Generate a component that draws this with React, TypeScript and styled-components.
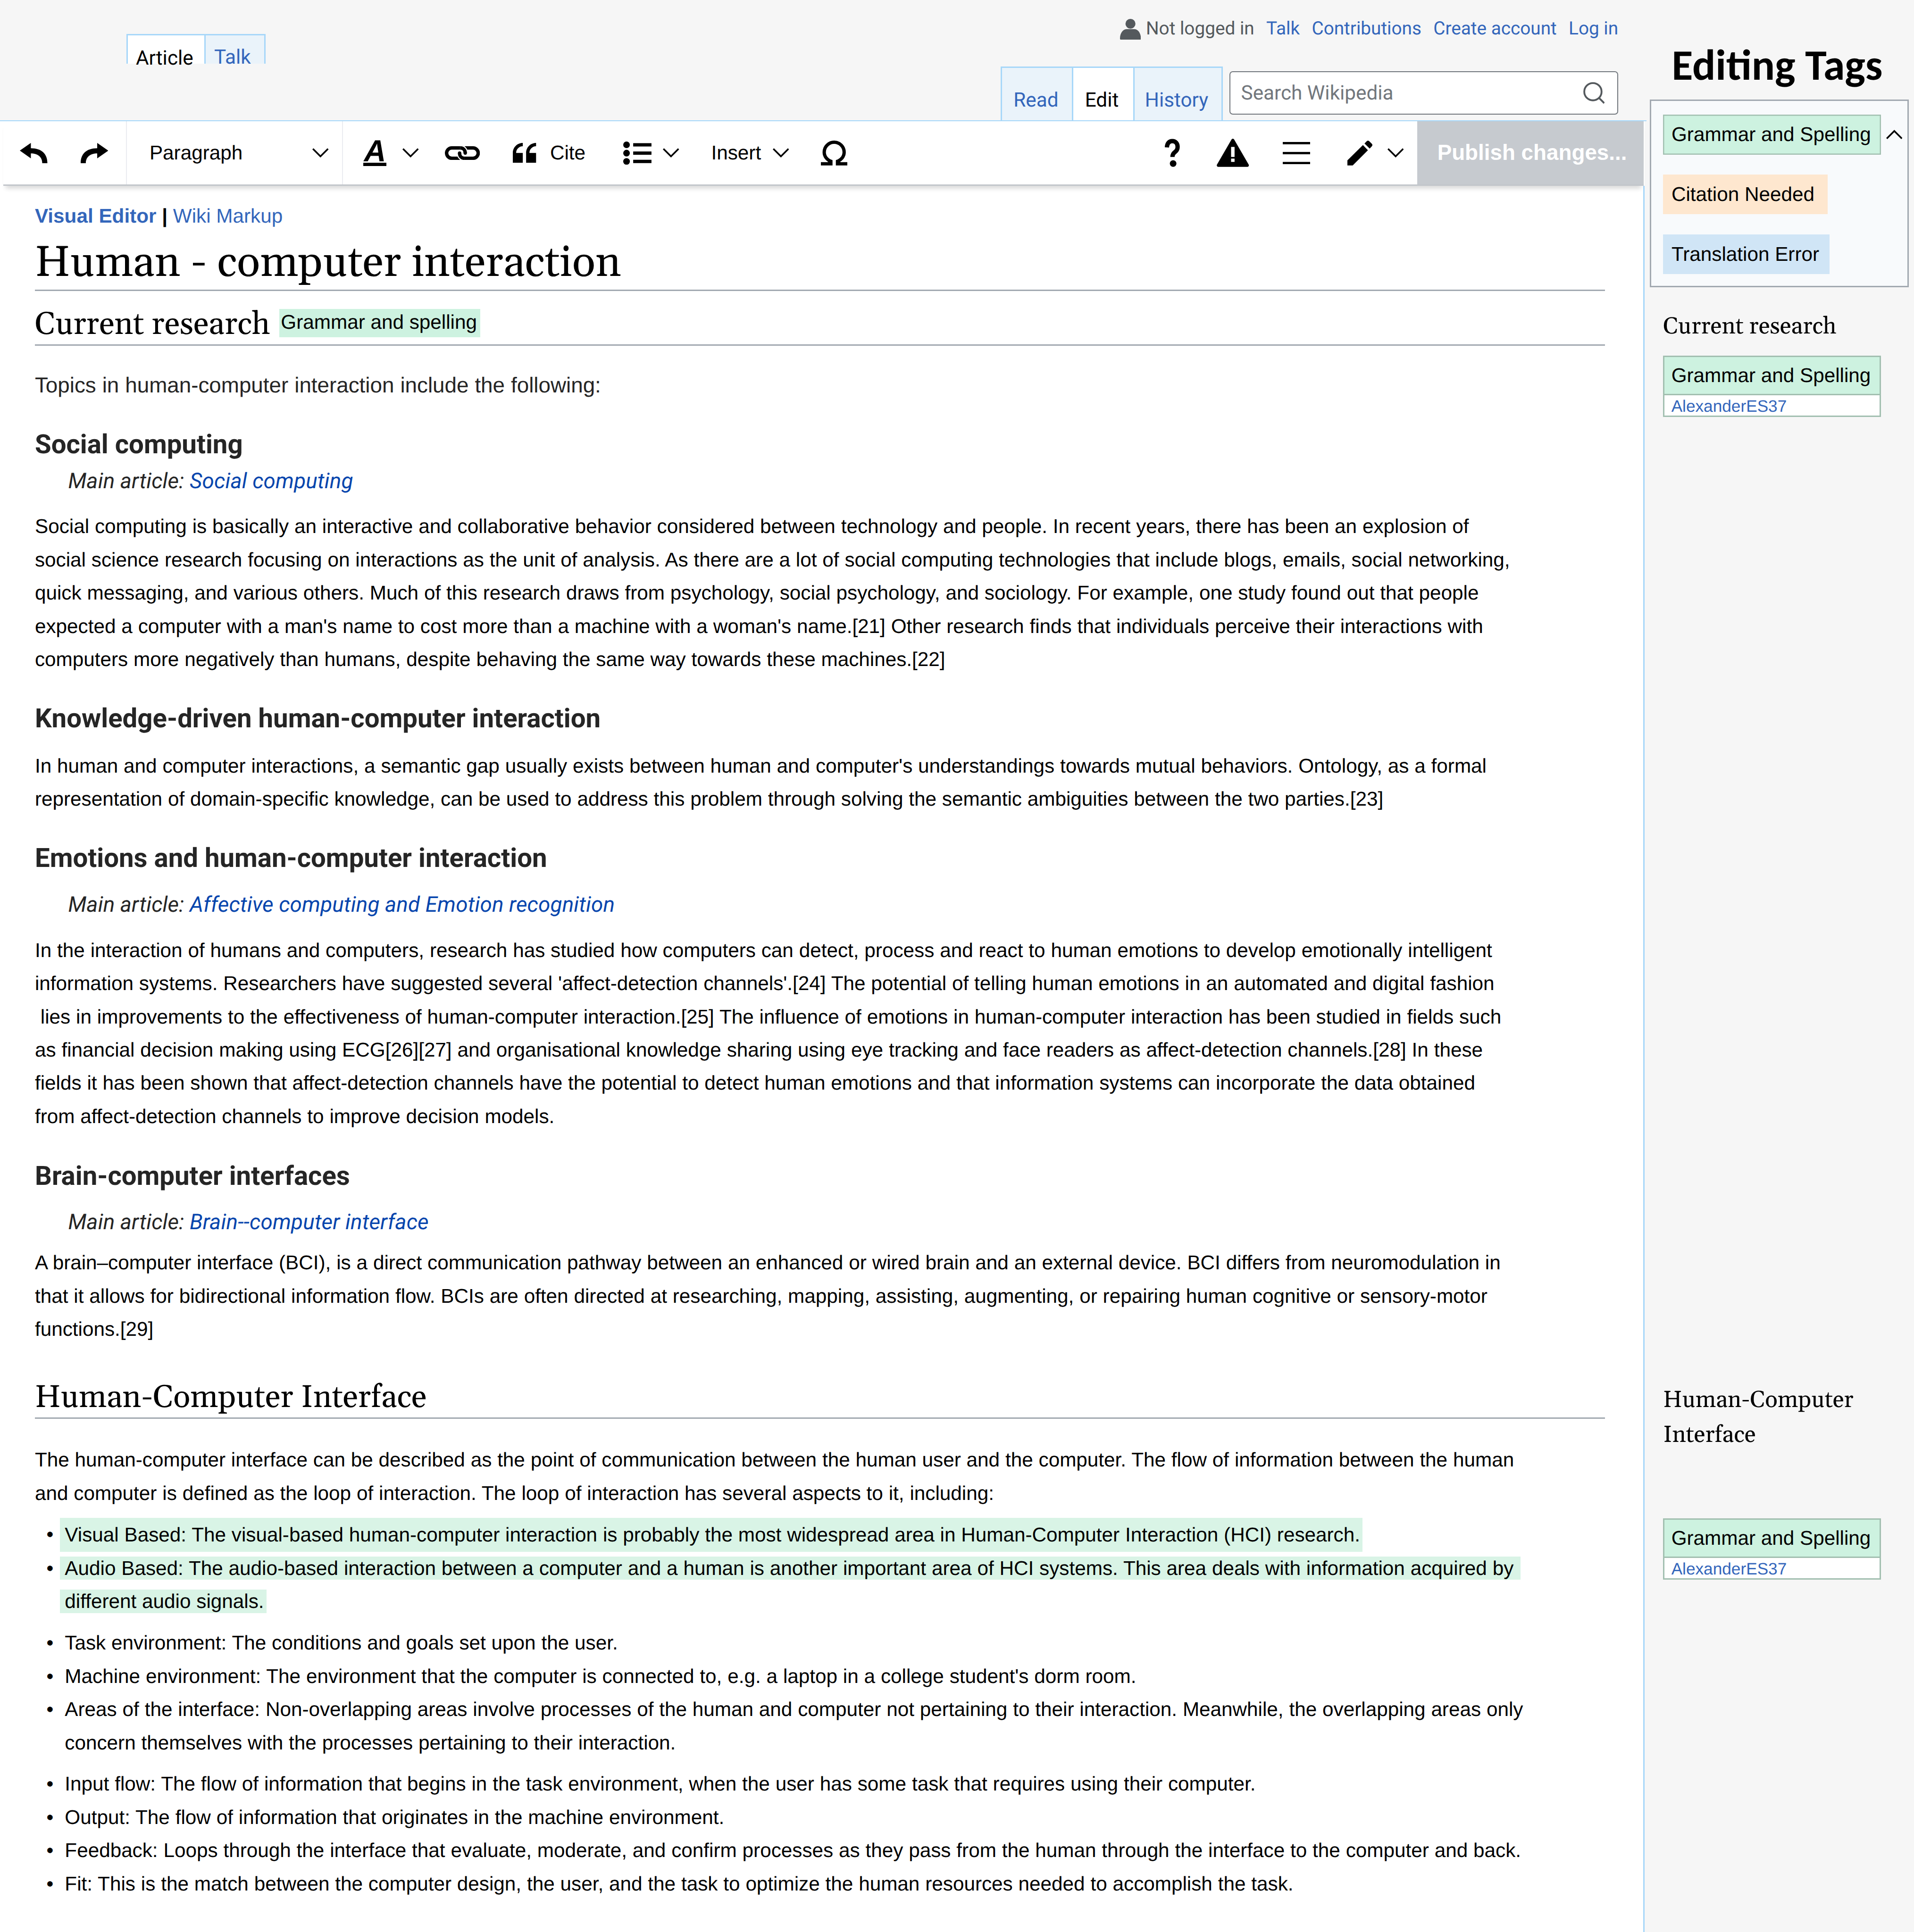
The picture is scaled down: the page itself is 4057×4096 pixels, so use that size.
import React from "react";
import styled, { createGlobalStyle, css } from "styled-components";

/* The page is designed on a 1152-unit wide grid; u() turns grid units into pixels. */
const UNIT = 4057 / 1152;
const u = (...n: number[]) => n.map((v) => `${+(v * UNIT).toFixed(3)}px`).join(" ");

const sans = `"Liberation Sans", Arial, sans-serif`;
const roboto = `Roboto, "Liberation Sans", sans-serif`;
const serif = `Georgia, Gelasio, "Liberation Serif", serif`;

const color = {
  chrome: "#f6f6f6",
  link: "#3366bb",
  linkDark: "#0645ad",
  line: "#a7d7f9",
  rule: "#a2a9b1",
  text: "#252525",
  green: "#cdf2e0",
  greenSoft: "#d9f4e6",
  greenLine: "#a2bfb0",
};

const GlobalStyle = createGlobalStyle`
  html, body { margin: 0; padding: 0; background: ${color.chrome}; }
  body { overflow: hidden; text-rendering: geometricPrecision; }
  *, *::before, *::after { box-sizing: border-box; }
  h1, h2, h3, p, ul { margin: 0; padding: 0; font-weight: 400; }
  svg { display: block; flex: none; }
`;

const Page = styled.div`
  display: flex;
  width: ${u(1152)};
  height: 4096px;
  overflow: hidden;
  background: ${color.chrome};
  font-family: ${sans};
  font-size: ${u(12)};
  color: #000;
`;

const Main = styled.div`
  display: flex;
  flex-direction: column;
  width: ${u(989.75)};
  flex: none;
  background: #fff;
`;

/* ---------- header ---------- */

const Header = styled.header`
  display: flex;
  justify-content: space-between;
  align-items: flex-start;
  width: ${u(991)};
  height: ${u(73)};
  flex: none;
  border-bottom: 2px solid ${color.line};
  background: ${color.chrome};
  font-family: ${roboto};
`;

const Tabs = styled.nav<{ $height: number }>`
  display: flex;
  height: ${(p) => u(p.$height)};
  border-top: ${u(1)} solid ${color.line};
  border-right: ${u(1)} solid ${color.line};
`;

const PageTabs = styled(Tabs)`
  margin: ${u(20.5, 0, 0, 76)};
`;

const Tab = styled.a<{ $active?: boolean; $width: number; $left: number; $top: number }>`
  width: ${(p) => u(p.$width)};
  padding: ${(p) => u(p.$top, 0, 0, p.$left)};
  border-left: ${u(1)} solid ${color.line};
  background: ${(p) => (p.$active ? "#fff" : "#eaf3fa")};
  color: ${(p) => (p.$active ? "#000" : color.link)};
  line-height: ${u(16)};
  white-space: nowrap;
`;

const HeaderRight = styled.div`
  display: flex;
  flex-direction: column;
  align-items: flex-end;
  padding: ${u(9.5, 17, 0, 0)};
`;

const UserBar = styled.div`
  display: flex;
  align-items: center;
  gap: ${u(7.2)};
  height: ${u(16)};
  font-size: ${u(11)};
  line-height: ${u(16)};
  color: ${color.link};
`;

const Anonymous = styled.span`
  display: flex;
  align-items: center;
  gap: ${u(3.1)};
  color: #54595d;
`;

const HeaderTools = styled.div`
  display: flex;
  align-items: flex-start;
  margin-top: ${u(14.5)};
`;

const Search = styled.div`
  display: flex;
  justify-content: space-between;
  align-items: center;
  width: ${u(234)};
  height: ${u(26)};
  margin: ${u(3, 0, 0, 4)};
  padding: ${u(0, 7.6, 0, 6.4)};
  border: 2px solid #72777d;
  border-radius: ${u(2)};
  background: #fff;
  color: #72777d;
`;

/* ---------- toolbar ---------- */

const Toolbar = styled.div`
  display: flex;
  align-items: center;
  position: relative;
  height: ${u(39)};
  flex: none;
  margin: ${u(0, 0.5, 0, 2)};
  border-bottom: ${u(1)} solid #c2c6cb;
  background: #fff;
  box-shadow: ${u(0, 3, 2.5, -1.4)} rgba(0, 0, 0, 0.14);
  line-height: ${u(20)};
`;

const ToolGroup = styled.div<{ $width?: number; $left: number; $divided?: boolean }>`
  display: flex;
  align-items: center;
  height: 100%;
  padding-left: ${(p) => u(p.$left)};
  ${(p) => (p.$width ? css`width: ${u(p.$width)};` : css`flex: 1;`)}
  ${(p) => p.$divided && css`border-right: 2px solid #eaecf0;`}
`;

const Tool = styled.span<{ $after?: number; $width?: number }>`
  display: flex;
  align-items: center;
  flex: none;
  height: ${u(20)};
  ${(p) => p.$width && css`width: ${u(p.$width)};`}
  margin-right: ${(p) => u(p.$after ?? 0)};
`;

const StyleLetter = styled.span`
  display: flex;
  justify-content: center;
  flex: none;
  width: ${u(14)};
  height: ${u(16)};
  margin: ${u(0, 9.6, 0, 0.2)};
  border-bottom: ${u(2)} solid #000;
  font: italic 700 ${u(18.4)} / ${u(13.4)} ${sans};
`;

const Publish = styled.button`
  align-self: stretch;
  width: ${u(136.25)};
  padding: ${u(0, 0, 0, 12.1)};
  border: 0;
  background: #c6cacf;
  color: #fff;
  font: 700 ${u(13)} / ${u(20)} ${sans};
  text-align: left;
`;

/* ---------- article ---------- */

const Article = styled.article`
  flex: 1;
  width: ${u(989.75)};
  padding: ${u(10.15, 0, 0, 21)};
  border-right: 3px solid ${color.line};
  background: #fff;
`;

const ModeSwitch = styled.div`
  line-height: ${u(16)};
  color: ${color.link};
  strong { font-weight: 700; }
  b { color: #000; }
`;

const Title = styled.h1`
  width: ${u(945)};
  height: ${u(34.4)};
  margin-top: ${u(2.6)};
  border-bottom: 3px solid ${color.rule};
  font: 400 ${u(26)} / ${u(35.8)} ${serif};
`;

const SectionHead = styled.h2<{ $gap: number }>`
  display: flex;
  width: ${u(945)};
  height: ${u(25.5)};
  margin-top: ${(p) => u(p.$gap)};
  border-bottom: 3px solid ${color.rule};
  font: 400 ${u(19)} / ${u(26)} ${serif};
`;

const InlineTag = styled.span`
  width: ${u(121)};
  height: ${u(17)};
  margin: ${u(3.5, 0, 0, 5.4)};
  padding-left: ${u(1)};
  background: ${color.green};
  font: 400 ${u(12)} / ${u(16.1)} ${sans};
`;

const Lead = styled.p`
  margin-top: ${u(13.9)};
  color: ${color.text};
  font-size: ${u(13)};
  line-height: ${u(20)};
  word-spacing: ${u(0.08)};
`;

const SubHead = styled.h3<{ $gap: number }>`
  margin-top: ${(p) => u(p.$gap)};
  color: ${color.text};
  font: 700 ${u(16)} / ${u(20)} ${roboto};
`;

const MainArticle = styled.div<{ $gap: number }>`
  margin: ${(p) => u(p.$gap, 0, 0, 20)};
  color: ${color.text};
  font: italic 400 ${u(13)} / ${u(20)} ${roboto};
  letter-spacing: ${u(0.054)};
  a { color: ${color.linkDark}; }
`;

const Text = styled.p<{ $gap: number }>`
  margin-top: ${(p) => u(p.$gap)};
  line-height: ${u(20)};
  word-spacing: ${u(0.035)};
  white-space: pre;
`;

const List = styled.ul`
  margin-top: ${u(4.7)};
  padding-left: ${u(7)};
  list-style: none;
`;

const Item = styled.li<{ $gap?: boolean }>`
  display: flex;
  margin-top: ${(p) => u(p.$gap ? 4.9 : 0)};
  line-height: ${u(20)};
  word-spacing: ${u(0.035)};
  white-space: pre;
  &::before {
    content: "•";
    width: ${u(11)};
  }
`;

const Mark = styled.span<{ $end: number }>`
  margin-left: ${u(-3)};
  padding: ${(p) => u(0.3, p.$end, 0.3, 3)};
  background: ${color.greenSoft};
`;

/* ---------- sidebar ---------- */

const Sidebar = styled.aside`
  flex: 1;
  padding: ${u(24, 3, 0, 3.25)};
`;

const SidebarTitle = styled.h2`
  padding-left: ${u(13.2)};
  font: 700 ${u(26.1)} / ${u(30)} Carlito, Calibri, Lato, sans-serif;
  white-space: nowrap;
`;

const TagPanel = styled.div`
  display: flex;
  flex-direction: column;
  gap: ${u(12)};
  height: ${u(113)};
  margin-top: ${u(6)};
  padding: ${u(8.2, 0, 0, 7.2)};
  border: 3px solid ${color.rule};
  background: #f8fafc;
`;

const TagRow = styled.div`
  display: flex;
  align-items: center;
  gap: ${u(3.2)};
`;

const Tag = styled.span<{ $bg: string; $width: number; $line?: string }>`
  width: ${(p) => u(p.$width)};
  height: ${u(24)};
  padding-left: ${u(5)};
  background: ${(p) => p.$bg};
  box-shadow: inset 0 0 0 2.5px ${(p) => p.$line ?? p.$bg};
  line-height: ${u(24)};
`;

const SidebarHeading = styled.h3<{ $gap: number }>`
  margin: ${(p) => u(p.$gap, 0, 0, 8)};
  font: 400 ${u(14)} / ${u(21)} ${serif};
`;

const Card = styled.div<{ $gap: number }>`
  width: ${u(131)};
  height: ${u(37)};
  margin: ${(p) => u(p.$gap, 0, 0, 8)};
  border: ${u(1)} solid ${color.greenLine};
  background: #fff;
`;

const CardTag = styled.div`
  height: ${u(23)};
  padding-left: ${u(4.1)};
  border-bottom: 3px solid ${color.greenLine};
  background: ${color.green};
  line-height: ${u(22.2)};
`;

const CardUser = styled.div`
  padding: ${u(0.9, 0, 0, 4.1)};
  color: ${color.link};
  font-size: ${u(10)};
  line-height: ${u(12)};
`;

/* ---------- icons ---------- */

type IconProps = { w: number; h: number; children: React.ReactNode; fill?: string };
const Icon = ({ w, h, children, fill = "#000" }: IconProps) => (
  <svg width={w * UNIT} height={h * UNIT} viewBox={`0 0 ${w} ${h}`} fill={fill}>
    {children}
  </svg>
);

const Chevron = ({ up }: { up?: boolean }) => (
  <Icon w={9.8} h={5.7} fill="none">
    <path d={up ? "M.35 5.3 4.9.75 9.45 5.3" : "M.35.4 4.9 4.95 9.45.4"} stroke="#000" strokeWidth="1" />
  </Icon>
);

const arrow = "M0 4.65 6.65 0V3.2C13 3.2 16.6 6.5 16.6 12.2H13.5C13.5 8.2 10.5 6.3 6.65 6.3V9.3Z";
const UndoIcon = () => (
  <Icon w={16.6} h={12.2}>
    <path d={arrow} />
  </Icon>
);
const RedoIcon = () => (
  <Icon w={16.6} h={12.2}>
    <path d={arrow} transform="matrix(-1 0 0 1 16.6 0)" />
  </Icon>
);

const LinkIcon = () => (
  <Icon w={21.1} h={8.3} fill="none">
    <g stroke="#000" strokeWidth="2.05">
      <path d="M9.3 7.27H4.15a3.12 3.12 0 0 1 0-6.24H9.3" />
      <path d="M11.8 1.03h5.15a3.12 3.12 0 0 1 0 6.24H11.8" />
    </g>
    <g stroke="#fff" strokeWidth="3.3">
      <path d="M9.3 1.03c1.9 0 2.95 1.4 2.95 3.1" />
      <path d="M11.8 7.27c-1.9 0-2.95-1.4-2.95-3.1" />
    </g>
    <g stroke="#000" strokeWidth="2.05">
      <path d="M9.2 1.03h.1c1.9 0 2.95 1.4 2.95 3.1" />
      <path d="M11.9 7.27h-.1c-1.9 0-2.95-1.4-2.95-3.1" />
    </g>
    <circle cx="12.25" cy="4.15" r="1.02" fill="#000" />
    <circle cx="8.85" cy="4.15" r="1.02" fill="#000" />
  </Icon>
);

const QuoteIcon = () => (
  <Icon w={14} h={12}>
    <path d="M6 0C2.7 0 0 2.7 0 6v6h6V6H2c0-2.2 1.8-4 4-4Z" />
    <path d="M14 0c-3.3 0-6 2.7-6 6v6h6V6h-4c0-2.2 1.8-4 4-4Z" />
  </Icon>
);

const ListIcon = () => (
  <Icon w={17} h={14}>
    {[2, 7, 12].map((y) => (
      <g key={y}>
        <circle cx="2" cy={y} r="2" />
        <rect x="6" y={y - 1} width="11" height="2" />
      </g>
    ))}
  </Icon>
);

const SpecialIcon = () => (
  <Icon w={16} h={15}>
    <path d="M6.6 12.7C3.8 11.8 2 9.6 2 7a6 6 0 0 1 12 0c0 2.6-1.8 4.8-4.6 5.7" fill="none" stroke="#000" strokeWidth="2" />
    <path d="M0 13h4l3-1.2V15H0ZM16 13h-4l-3-1.2V15h7Z" />
  </Icon>
);

const HelpIcon = () => (
  <Icon w={9} h={17}>
    <path
      d="M1.25 5.25C1.4 2.8 2.6 1.45 4.5 1.45c2.1 0 3.2 1.6 3.2 3.5 0 1.7-.7 2.4-1.6 3.1C5 8.9 4.6 9.6 4.6 11"
      fill="none"
      stroke="#000"
      strokeWidth="2.6"
    />
    <circle cx="5" cy="15" r="2" />
  </Icon>
);

const WarningIcon = () => (
  <Icon w={19.4} h={17}>
    <path d="M8.95.45a.85.85 0 0 1 1.5 0L19.25 15.6a.95.95 0 0 1-.85 1.4H1a.95.95 0 0 1-.85-1.4Z" />
    <path d="M8.65 5h2.1v6h-2.1ZM8.65 12h2.1v2h-2.1Z" fill="#fff" />
  </Icon>
);

const MenuIcon = () => (
  <Icon w={16.5} h={13.4}>
    {[0, 6, 12].map((y) => (
      <rect key={y} y={y} width="16.5" height="1.4" />
    ))}
  </Icon>
);

const PencilIcon = () => (
  <Icon w={15} h={15}>
    <path d="M0 11.9 9.35 2.7l3 3.1L3.2 15H0Z" />
    <path d="M10.3 1.75 11.6.4a1.1 1.1 0 0 1 1.6 0l1.5 1.5a1.1 1.1 0 0 1 0 1.6l-1.3 1.3Z" />
  </Icon>
);

const UserIcon = () => (
  <Icon w={12.6} h={12.5} fill="#54595d">
    <ellipse cx="6.3" cy="2.95" rx="3" ry="2.95" />
    <path d="M4 6.2h4.6c2.5 0 4 2.8 4 5.6 0 .5-.1.7-.5.7H.5c-.4 0-.5-.2-.5-.7 0-2.8 1.5-5.6 4-5.6Z" />
  </Icon>
);

const SearchIcon = () => (
  <Icon w={13} h={13} fill="none">
    <circle cx="5.8" cy="5.8" r="5.2" stroke="#54595d" strokeWidth="1.1" />
    <path d="m9.4 9.5 3.2 3.2" stroke="#54595d" strokeWidth="1.1" />
  </Icon>
);

/* ---------- content ---------- */

const social = `Social computing is basically an interactive and collaborative behavior considered between technology and people. In recent years, there has been an explosion of
social science research focusing on interactions as the unit of analysis. As there are a lot of social computing technologies that include blogs, emails, social networking,
quick messaging, and various others. Much of this research draws from psychology, social psychology, and sociology. For example, one study found out that people
expected a computer with a man's name to cost more than a machine with a woman's name.[21] Other research finds that individuals perceive their interactions with
computers more negatively than humans, despite behaving the same way towards these machines.[22]`;

const knowledge = `In human and computer interactions, a semantic gap usually exists between human and computer's understandings towards mutual behaviors. Ontology, as a formal
representation of domain-specific knowledge, can be used to address this problem through solving the semantic ambiguities between the two parties.[23]`;

const emotions = `In the interaction of humans and computers, research has studied how computers can detect, process and react to human emotions to develop emotionally intelligent
information systems. Researchers have suggested several 'affect-detection channels'.[24] The potential of telling human emotions in an automated and digital fashion
 lies in improvements to the effectiveness of human-computer interaction.[25] The influence of emotions in human-computer interaction has been studied in fields such
as financial decision making using ECG[26][27] and organisational knowledge sharing using eye tracking and face readers as affect-detection channels.[28] In these
fields it has been shown that affect-detection channels have the potential to detect human emotions and that information systems can incorporate the data obtained
from affect-detection channels to improve decision models.`;

const brain = `A brain–computer interface (BCI), is a direct communication pathway between an enhanced or wired brain and an external device. BCI differs from neuromodulation in
that it allows for bidirectional information flow. BCIs are often directed at researching, mapping, assisting, augmenting, or repairing human cognitive or sensory-motor
functions.[29]`;

const hci = `The human-computer interface can be described as the point of communication between the human user and the computer. The flow of information between the human
and computer is defined as the loop of interaction. The loop of interaction has several aspects to it, including:`;

const TagCard = ({ gap }: { gap: number }) => (
  <Card $gap={gap}>
    <CardTag>Grammar and Spelling</CardTag>
    <CardUser>AlexanderES37</CardUser>
  </Card>
);

export default function App() {
  return (
    <>
      <GlobalStyle />
      <Page>
        <Main>
          <Header>
            <PageTabs $height={17.75}>
              <Tab $active $width={47} $left={4.9} $top={5.9}>Article</Tab>
              <Tab $width={36} $left={5.1} $top={5.4}>Talk</Tab>
            </PageTabs>
            <HeaderRight>
              <UserBar>
                <Anonymous>
                  <UserIcon />
                  Not logged in
                </Anonymous>
                <a>Talk</a>
                <a>Contributions</a>
                <a>Create account</a>
                <a>Log in</a>
              </UserBar>
              <HeaderTools>
                <Tabs $height={32.5}>
                  <Tab $width={43} $left={7} $top={11.6}>Read</Tab>
                  <Tab $active $width={37} $left={7} $top={11.6}>Edit</Tab>
                  <Tab $width={53} $left={6.1} $top={11.6}>History</Tab>
                </Tabs>
                <Search>
                  Search Wikipedia
                  <SearchIcon />
                </Search>
              </HeaderTools>
            </HeaderRight>
          </Header>

          <Toolbar>
            <ToolGroup $width={74.5} $left={10} $divided>
              <Tool $after={19.9}><UndoIcon /></Tool>
              <Tool><RedoIcon /></Tool>
            </ToolGroup>
            <ToolGroup $width={130} $left={13.5} $divided>
              <Tool $width={98}>Paragraph</Tool>
              <Chevron />
            </ToolGroup>
            <ToolGroup $left={12}>
              <StyleLetter>A</StyleLetter>
              <Tool $after={15.6}><Chevron /></Tool>
              <Tool $after={20}><LinkIcon /></Tool>
              <Tool $after={8.3}><QuoteIcon /></Tool>
              <Tool $width={44}>Cite</Tool>
              <Tool $after={7}><ListIcon /></Tool>
              <Tool $after={19.2}><Chevron /></Tool>
              <Tool $width={37}>Insert</Tool>
              <Tool $after={19.2}><Chevron /></Tool>
              <Tool $after={191}><SpecialIcon /></Tool>
              <Tool $after={22.4}><HelpIcon /></Tool>
              <Tool $after={20.2}><WarningIcon /></Tool>
              <Tool $after={22.5}><MenuIcon /></Tool>
              <Tool $after={9}><PencilIcon /></Tool>
              <Chevron />
            </ToolGroup>
            <Publish>Publish changes...</Publish>
          </Toolbar>

          <Article>
            <ModeSwitch>
              <strong>Visual Editor</strong> <b>|</b> <a>Wiki Markup</a>
            </ModeSwitch>
            <Title>Human - computer interaction</Title>
            <SectionHead $gap={7.4}>
              Current research
              <InlineTag>Grammar and spelling</InlineTag>
            </SectionHead>
            <Lead>Topics in human-computer interaction include the following:</Lead>

            <SubHead $gap={15.6}>Social computing</SubHead>
            <MainArticle $gap={2.4}>Main article: <a>Social computing</a></MainArticle>
            <Text $gap={7.1}>{social}</Text>

            <SubHead $gap={15.6}>Knowledge-driven human-computer interaction</SubHead>
            <Text $gap={8.5}>{knowledge}</Text>

            <SubHead $gap={15.5}>Emotions and human-computer interaction</SubHead>
            <MainArticle $gap={8.2}>Main article: <a>Affective computing and Emotion recognition</a></MainArticle>
            <Text $gap={7.3}>{emotions}</Text>

            <SubHead $gap={15.7}>Brain-computer interfaces</SubHead>
            <MainArticle $gap={8.2}>Main article: <a>Brain--computer interface</a></MainArticle>
            <Text $gap={4.3}>{brain}</Text>

            <SectionHead $gap={18.2}>Human-Computer Interface</SectionHead>
            <Text $gap={14.9}>{hci}</Text>
            <List>
              <Item>
                <Mark $end={1.5}>Visual Based: The visual-based human-computer interaction is probably the most widespread area in Human-Computer Interaction (HCI) research.</Mark>
              </Item>
              <Item>
                <div>
                  <Mark $end={0.8}>{"Audio Based: The audio-based interaction between a computer and a human is another important area of HCI systems. This area deals with information acquired by "}</Mark>
                  {"\n"}
                  <Mark $end={1.4}>different audio signals.</Mark>
                </div>
              </Item>
              <Item $gap>Task environment: The conditions and goals set upon the user.</Item>
              <Item>Machine environment: The environment that the computer is connected to, e.g. a laptop in a college student's dorm room.</Item>
              <Item>{"Areas of the interface: Non-overlapping areas involve processes of the human and computer not pertaining to their interaction. Meanwhile, the overlapping areas only\nconcern themselves with the processes pertaining to their interaction."}</Item>
              <Item $gap>Input flow: The flow of information that begins in the task environment, when the user has some task that requires using their computer.</Item>
              <Item>Output: The flow of information that originates in the machine environment.</Item>
              <Item>Feedback: Loops through the interface that evaluate, moderate, and confirm processes as they pass from the human through the interface to the computer and back.</Item>
              <Item>Fit: This is the match between the computer design, the user, and the task to optimize the human resources needed to accomplish the task.</Item>
            </List>
          </Article>
        </Main>

        <Sidebar>
          <SidebarTitle>Editing Tags</SidebarTitle>
          <TagPanel>
            <TagRow>
              <Tag $bg={color.green} $line={color.greenLine} $width={131}>Grammar and Spelling</Tag>
              <Chevron up />
            </TagRow>
            <TagRow>
              <Tag $bg="#fee7cf" $width={99}>Citation Needed</Tag>
            </TagRow>
            <TagRow>
              <Tag $bg="#d0e5f6" $width={100}>Translation Error</Tag>
            </TagRow>
          </TagPanel>
          <SidebarHeading $gap={13.4}>Current research</SidebarHeading>
          <TagCard gap={6.6} />
          <SidebarHeading $gap={581.7}>Human-Computer Interface</SidebarHeading>
          <TagCard gap={39.3} />
        </Sidebar>
      </Page>
    </>
  );
}
